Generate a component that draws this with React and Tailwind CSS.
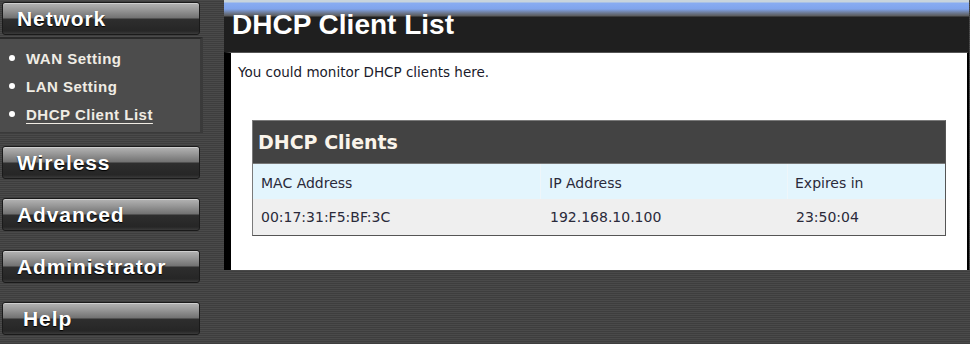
const subItems = [
  { label: 'WAN Setting' },
  { label: 'LAN Setting' },
  { label: 'DHCP Client List', active: true },
];

const menuButtons = [
  { label: 'Wireless', pad: 'pl-[14px]' },
  { label: 'Advanced', pad: 'pl-[14px]' },
  { label: 'Administrator', pad: 'pl-[14px]' },
  { label: 'Help', pad: 'pl-[20px]' },
];

const MenuButton = ({ label, pad = 'pl-[14px]', className = '' }) => (
  <div
    className={`ml-[2px] w-[198px] h-[33px] flex items-center rounded-[3px] border border-[#1a1a1a] bg-[linear-gradient(to_bottom,#b4b4b4_0%,#9a9a9a_20%,#727272_48%,#2e2e2e_52%,#262626_90%,#3a3a3a_100%)] shadow-[inset_0_1px_0_#cfcfcf] ${pad} ${className}`}
  >
    <span className="font-['Liberation_Sans',Arial,sans-serif] font-bold text-[21px] tracking-[0.9px] text-white leading-none [text-shadow:0_1px_1px_#000]">
      {label}
    </span>
  </div>
);

export default function App() {
  return (
    <div className="w-[970px] h-[344px] overflow-hidden flex bg-[repeating-linear-gradient(to_bottom,#4a4a4a_0px,#4a4a4a_1px,#3e3e3e_1px,#3e3e3e_2px)]">
      {/* sidebar */}
      <aside className="w-[224px] shrink-0 pt-[2px]">
        <MenuButton label="Network" />
        <div className="mt-[2px] w-[203px] h-[96px] bg-[#4c4c4c] border-t-2 border-t-[#2a2a2a] border-r-[3px] border-r-[#3a3a3a] border-b border-b-[#3a3a3a] pt-[5px] font-['Liberation_Sans',Arial,sans-serif]">
          {subItems.map((it) => (
            <div key={it.label} className="h-[28px] flex items-center pl-[9px]">
              <span className="w-[6px] h-[6px] rounded-full bg-white mr-[11px]" />
              <span
                className={`text-[15px] font-bold tracking-[0.5px] text-[#f0ece4] leading-none ${it.active ? 'underline underline-offset-[3px]' : ''}`}
              >
                {it.label}
              </span>
            </div>
          ))}
        </div>
        <div className="mt-[13px]">
          {menuButtons.map((b) => (
            <MenuButton key={b.label} label={b.label} pad={b.pad} className="mb-[19px]" />
          ))}
        </div>
      </aside>

      {/* content */}
      <main className="w-[745px] shrink-0 self-start">
        <div className="h-[52px] bg-[linear-gradient(to_bottom,#c8d4dc_0px,#c8d4dc_2px,#88acf2_3px,#80a4ec_9px,#6c7890_13px,#5a5a5a_16px,#1f1f1f_17px,#1f1f1f_100%)] pl-[8px] pt-[9px]">
          <h1 className="font-['Liberation_Sans',Arial,sans-serif] font-bold text-[28px] leading-[32px] text-white">
            DHCP Client List
          </h1>
        </div>
        <div className="h-[218px] bg-white border-l-[7px] border-l-black border-r-2 border-r-black border-t border-t-[#555] pl-[7px] pt-[11px] font-['DejaVu_Sans',sans-serif]">
          <p className="text-[13.5px] text-[#1a1a2a] leading-[16px]">You could monitor DHCP clients here.</p>

          <div className="mt-[40px] ml-[14px] w-[694px] border border-[#7a7a7a] border-b-[#555] border-r-[#555]">
            <div className="h-[43px] bg-[#434343] flex items-center pl-[5px] border-b border-b-[#777]">
              <span className="font-bold text-[19px] text-[#faf4ea] leading-none">DHCP Clients</span>
            </div>
            <div className="grid grid-cols-[288px_247px_1fr] text-[14px] text-[#2a2a3a]">
              <div className="h-[35px] bg-[#e3f5fd] flex items-center pl-[8px] pt-[3px] border-r border-r-[#eef6fa]">MAC Address</div>
              <div className="h-[35px] bg-[#e3f5fd] flex items-center pl-[8px] pt-[3px] border-r border-r-[#eef6fa]">IP Address</div>
              <div className="h-[35px] bg-[#e3f5fd] flex items-center pl-[7px] pt-[3px]">Expires in</div>
              <div className="h-[36px] bg-[#efefef] flex items-center pl-[8px]">00:17:31:F5:BF:3C</div>
              <div className="h-[36px] bg-[#efefef] flex items-center pl-[9px]">192.168.10.100</div>
              <div className="h-[36px] bg-[#efefef] flex items-center pl-[8px]">23:50:04</div>
            </div>
          </div>
        </div>
      </main>
    </div>
  );
}
